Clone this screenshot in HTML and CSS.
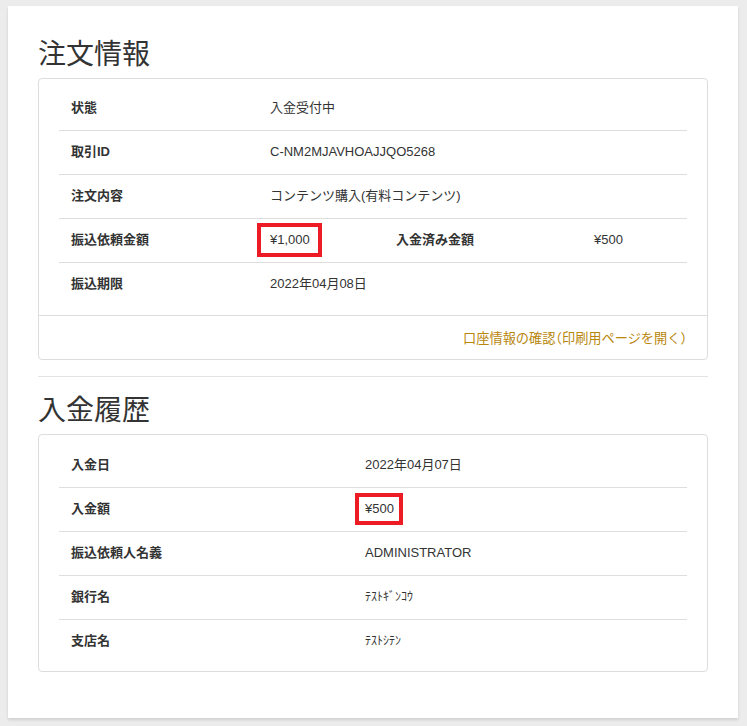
FILE: index.html
```html
<!DOCTYPE html>
<html lang="ja">
<head>
<meta charset="utf-8">
<title>注文情報</title>
<link rel="stylesheet" href="styles.css">
</head>
<body>
<main class="panel">
  <h2 class="title">注文情報</h2>
  <section class="card">
    <div class="card-body">
      <div class="tbl tbl-order">
        <div class="row">
          <div class="th">状態</div>
          <div class="td span3">入金受付中</div>
        </div>
        <div class="row">
          <div class="th">取引ID</div>
          <div class="td span3">C-NM2MJAVHOAJJQO5268</div>
        </div>
        <div class="row">
          <div class="th">注文内容</div>
          <div class="td span3">コンテンツ購入(有料コンテンツ)</div>
        </div>
        <div class="row">
          <div class="th">振込依頼金額</div>
          <div class="td"><span class="mark mark-a">¥1,000</span></div>
          <div class="th">入金済み金額</div>
          <div class="td">¥500</div>
        </div>
        <div class="row">
          <div class="th">振込期限</div>
          <div class="td span3">2022年04月08日</div>
        </div>
      </div>
    </div>
    <div class="card-footer">
      <a class="link" href="#">口座情報の確認（印刷用ページを開く）</a>
    </div>
  </section>
  <hr class="sep">
  <h2 class="title title2">入金履歴</h2>
  <section class="card">
    <div class="card-body card-body-2">
      <div class="tbl tbl-pay">
        <div class="row">
          <div class="th">入金日</div>
          <div class="td">2022年04月07日</div>
        </div>
        <div class="row">
          <div class="th">入金額</div>
          <div class="td"><span class="mark mark-b">¥500</span></div>
        </div>
        <div class="row">
          <div class="th">振込依頼人名義</div>
          <div class="td">ADMINISTRATOR</div>
        </div>
        <div class="row">
          <div class="th">銀行名</div>
          <div class="td kana">ﾃｽﾄｷﾞﾝｺｳ</div>
        </div>
        <div class="row">
          <div class="th">支店名</div>
          <div class="td kana">ﾃｽﾄｼﾃﾝ</div>
        </div>
      </div>
    </div>
  </section>
</main>
</body>
</html>
```
FILE: styles.css
```css
html, body {
  margin: 0;
  padding: 0;
}
body {
  background: #ececec;
  font-family: "Liberation Sans", "Noto Sans CJK JP", sans-serif;
  font-size: 13px;
  color: #333;
  padding: 6px 9px 9px 8px;
}
.panel {
  background: #fff;
  box-shadow: 0 2px 3px rgba(0, 0, 0, 0.12);
  padding: 30px 30px 46px 30px;
}
.title {
  margin: 0;
  font-size: 28px;
  font-weight: normal;
  line-height: 38px;
  padding-bottom: 4px;
  color: #333;
  height: 38px;
}
.title2 {
  margin-top: 15px;
}
.card {
  border: 1px solid #ddd;
  border-radius: 4px;
  margin-top: 0;
}
.card-body {
  padding: 7px 20px 9px 20px;
}
.card-body-2 {
  padding-top: 8px;
  padding-bottom: 8px;
}
.tbl .row {
  display: grid;
  height: 44px;
  align-items: center;
  border-top: 1px solid #dedede;
  box-sizing: border-box;
  padding-bottom: 1px;
  line-height: 18px;
}
.tbl .row:first-child {
  border-top: none;
}
.tbl-order .row {
  grid-template-columns: 199px 126px 198px 1fr;
}
.tbl-pay .row {
  grid-template-columns: 294px 1fr;
}
.span3 {
  grid-column: span 3;
}
.th {
  font-weight: bold;
  padding-left: 12px;
}
.td {
  padding-left: 12px;
}
.kana {
  font-size: 12px;
}
.mark {
  display: inline-block;
  border: 4px solid #ed1c24;
  line-height: 18px;
}
.mark-a {
  padding: 4px 8px 4px 9px;
  margin: -8px 0 -8px -13px;
}
.mark-b {
  padding: 3px 5px 3px 6px;
  margin: -7px 0 -7px -10px;
}
.card-footer {
  border-top: 1px solid #ddd;
  height: 43px;
  display: flex;
  align-items: center;
  justify-content: flex-end;
  padding-right: 20px;
}
.link {
  color: #b8860b;
  text-decoration: none;
  font-size: 13.2px;
  font-feature-settings: "halt";
}
.sep {
  border: none;
  border-top: 1px solid #e3e3e3;
  margin: 16px 0 0 0;
}
```
